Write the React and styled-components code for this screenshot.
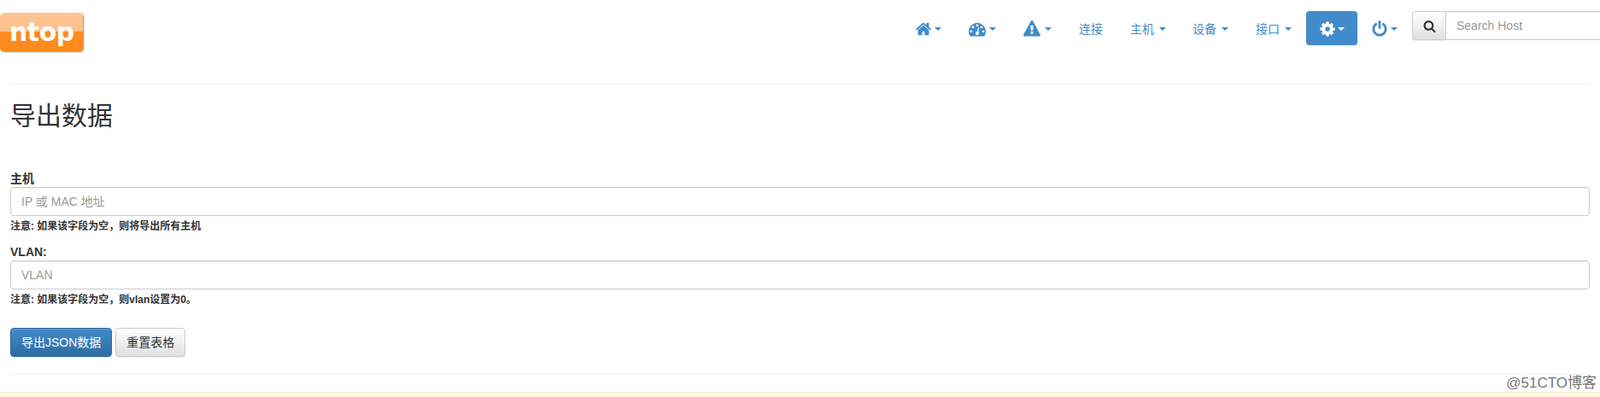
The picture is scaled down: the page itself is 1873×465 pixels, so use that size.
// App.jsx
import styled, { createGlobalStyle } from "styled-components";

const GlobalStyle = createGlobalStyle`
  html, body {
    margin: 0;
    height: 100%;
    overflow: hidden;
    background: #fff;
  }
  body {
    font-family: "Liberation Sans", "Noto Sans CJK SC", sans-serif;
    font-size: 14px;
    line-height: 20px;
    color: #333;
  }
  * { box-sizing: border-box; }
`;

const Page = styled.div`
  position: relative;
  width: 1873px;
  height: 465px;
  overflow: hidden;
`;

const Header = styled.header`
  display: flex;
  align-items: flex-start;
  height: 98px;
  padding-top: 13px;
`;

const Logo = styled.a`
  flex: none;
  display: block;
  width: 97px;
  height: 45px;
  margin-top: 2px;
  padding-left: 11px;
  border-radius: 5px 4px 4px 4px;
  background: linear-gradient(#fdc592 0, #fdc08a 50%, #ff8c20 50%, #ff8a1c 100%);
  box-shadow: 1px 1px 2px #8a8a8a;
  color: #fff;
  font-family: "DejaVu Sans", sans-serif;
  font-weight: 700;
  font-size: 30px;
  line-height: 45px;
  letter-spacing: -0.5px;
`;

const Nav = styled.nav`
  display: flex;
  align-items: flex-start;
  margin-left: 959px;
  flex: none;
`;

const NavItem = styled.a`
  display: flex;
  align-items: center;
  height: 40px;
  margin-right: ${(p) => p.$gap ?? 2}px;
  padding: 2px 15px 0;
  border-radius: 4px;
  color: ${(p) => (p.$active ? "#fff" : "#428bca")};
  background: ${(p) => (p.$active ? "#428bca" : "transparent")};
  font-size: 14px;
  white-space: nowrap;
`;

const Caret = styled.span`
  display: inline-block;
  width: 0;
  height: 0;
  margin-left: ${(p) => p.$left ?? 6}px;
  border-top: 4px solid currentColor;
  border-left: 4px solid transparent;
  border-right: 4px solid transparent;
`;

const Icon = styled.svg`
  display: block;
  width: ${(p) => p.$size}px;
  height: ${(p) => p.$size}px;
  fill: currentColor;
`;

const SearchGroup = styled.div`
  flex: none;
  display: flex;
  width: 230px;
  height: 34px;
`;

const SearchButton = styled.button`
  flex: none;
  display: flex;
  align-items: center;
  justify-content: center;
  width: 39px;
  padding: 0;
  border: 1px solid #ccc;
  border-right: 0;
  border-radius: 4px 0 0 4px;
  background: linear-gradient(#fff, #e0e0e0);
  box-shadow: 0 1px 1px rgba(0, 0, 0, 0.075);
  color: #333;
`;

const Field = styled.input`
  display: block;
  width: 100%;
  height: 34px;
  padding: 6px 12px;
  border: 1px solid #ccc;
  border-radius: ${(p) => (p.$joined ? "0" : "4px")};
  box-shadow: inset 0 1px 1px rgba(0, 0, 0, 0.075);
  background: #fff;
  color: #555;
  font: inherit;
  outline: none;

  &::placeholder {
    color: #999;
    opacity: 1;
  }
`;

const Content = styled.main`
  padding: 0 12px;
`;

const Rule = styled.hr`
  height: 1px;
  margin: 0;
  border: 0;
  background: #eee;
`;

const Title = styled.h2`
  margin: 20px 0 0;
  height: 79px;
  font-weight: 400;
  font-size: 30px;
  line-height: 33px;
  color: #333;
`;

const Group = styled.div`
  margin-bottom: ${(p) => p.$after}px;
`;

const Label = styled.label`
  display: block;
  height: 20px;
  margin-bottom: 1px;
  padding-top: 1px;
  font-weight: 700;
  font-size: 14px;
`;

const Note = styled.small`
  display: block;
  margin-top: 2px;
  font-weight: 700;
  font-size: 12px;
  line-height: 20px;
  color: #333;
`;

const Actions = styled.div`
  display: flex;
  gap: 4px;
`;

const Button = styled.button`
  height: 34px;
  padding: 0 12px;
  border: 1px solid ${(p) => (p.$primary ? "#2b669a" : "#ccc")};
  border-radius: 4px;
  background: ${(p) =>
    p.$primary
      ? "linear-gradient(#428bca, #2d6ca2)"
      : "linear-gradient(#fff, #e0e0e0)"};
  box-shadow: inset 0 1px 0 rgba(255, 255, 255, 0.15), 0 1px 1px rgba(0, 0, 0, 0.075);
  color: ${(p) => (p.$primary ? "#fff" : "#333")};
  font: inherit;
`;

const Footer = styled.div`
  margin-top: 20px;
  height: 1px;
  background: #eee;
`;

const Alert = styled.div`
  position: absolute;
  left: 0;
  right: 0;
  top: 459px;
  height: 20px;
  border-top: 1px solid #faebcc;
  background: #fcf8e3;
`;

const Watermark = styled.span`
  position: absolute;
  right: 4px;
  top: 437px;
  font-size: 17px;
  line-height: 24px;
  color: #777;
`;

const paths = {
  home: "M1472 992v480q0 26-19 45t-45 19h-384v-384h-256v384h-384q-26 0-45-19t-19-45v-480q0-1 .5-3t.5-3l575-474 575 474q1 2 1 6zm223-69l-62 74q-8 9-21 11h-3q-13 0-21-7l-692-577-692 577q-12 8-24 7-13-2-21-11l-62-74q-8-10-7-23.500t11-21.500l719-599q32-26 76-26t76 26l244 204v-195q0-14 9-23t23-9h192q14 0 23 9t9 23v408l219 182q10 8 11 21.500t-7 23.500z",
  gauge: "M384 1152q0-53-37.500-90.500t-90.500-37.500-90.500 37.500-37.500 90.500 37.500 90.500 90.500 37.500 90.500-37.500 37.500-90.500zm192-448q0-53-37.500-90.500t-90.500-37.500-90.500 37.500-37.500 90.500 37.500 90.500 90.500 37.500 90.500-37.500 37.500-90.500zm428 481l101-382q6-26-7.500-48.500t-38.500-29.500-48 6.500-30 39.500l-101 382q-60 5-107 43.500t-63 98.500q-20 77 20 146t117 89 146-20 89-117q16-60-6-117t-72-91zm660-33q0-53-37.500-90.500t-90.500-37.500-90.500 37.500-37.500 90.500 37.500 90.500 90.500 37.500 90.500-37.500 37.500-90.500zm-640-640q0-53-37.500-90.500t-90.500-37.500-90.500 37.500-37.500 90.500 37.500 90.500 90.500 37.500 90.500-37.500 37.500-90.500zm448 192q0-53-37.500-90.500t-90.500-37.500-90.500 37.500-37.500 90.500 37.500 90.500 90.500 37.500 90.500-37.500 37.500-90.500zm320 448q0 261-141 483-19 29-54 29h-1402q-35 0-54-29-141-221-141-483 0-182 71-348t191-286 286-191 348-71 348 71 286 191 191 286 71 348z",
  warning: "M1024 1375v-190q0-14-9.500-23.500t-22.500-9.500h-192q-13 0-22.500 9.500t-9.500 23.500v190q0 14 9.500 23.500t22.500 9.500h192q13 0 22.500-9.500t9.500-23.500zm-2-374l18-459q0-12-10-19-13-11-24-11h-220q-11 0-24 11-10 7-10 21l17 457q0 10 10 16.500t24 6.500h185q14 0 23.500-6.500t10.500-16.500zm-14-934l768 1408q35 63-2 126-17 29-46.500 46t-63.500 17h-1536q-34 0-63.500-17t-46.500-46q-37-63-2-126l768-1408q17-31 47-49t65-18 65 18 47 49z",
  cog: "M1152 896q0-106-75-181t-181-75-181 75-75 181 75 181 181 75 181-75 75-181zm512-109v222q0 12-8 23t-20 13l-185 28q-19 54-39 91 35 50 107 138 10 12 10 25t-9 23q-27 37-99 108t-94 71q-12 0-26-9l-138-108q-44 23-91 38-16 136-29 186-7 28-36 28h-222q-14 0-24.500-8.500t-11.500-21.500l-28-184q-49-16-90-37l-141 107q-10 9-25 9-14 0-25-11-126-114-165-168-7-10-7-23 0-12 8-23 15-21 51-66.500t54-70.500q-27-50-41-99l-183-27q-13-2-21-12.500t-8-23.500v-222q0-12 8-23t19-13l186-28q14-46 39-92-40-57-107-138-10-12-10-24 0-10 9-23 26-36 98.500-107.500t94.500-71.500q13 0 26 10l138 107q44-23 91-38 16-136 29-186 7-28 36-28h222q14 0 24.500 8.500t11.500 21.500l28 184q49 16 90 37l142-107q9-9 24-9 13 0 25 10 129 119 165 170 7 8 7 22 0 12-8 23-15 21-51 66.500t-54 70.500q26 50 41 98l183 28q13 2 22 12.500t9 23.500z",
  power: "M1664 896q0 156-61 298t-164 245-245 164-298 61-298-61-245-164-164-245-61-298q0-182 80.500-343t226.500-270q43-32 95.500-25t83.500 50q32 42 24.500 94.500t-49.500 84.500q-98 74-151.500 181t-53.500 228q0 104 40.500 198.500t109.500 163.500 163.500 109.500 198.500 40.500 198.500-40.500 163.500-109.500 109.500-163.500 40.500-198.500q0-121-53.500-228t-151.500-181q-42-32-49.500-84.500t24.500-94.500q31-43 84-50t95 25q146 109 226.500 270t80.500 343zm-640-768v640q0 52-38 90t-90 38-90-38-38-90v-640q0-52 38-90t90-38 90 38 38 90z",
  search: "M1216 832q0-185-131.500-316.500t-316.500-131.500-316.500 131.500-131.500 316.500 131.500 316.500 316.500 131.500 316.500-131.500 131.500-316.500zm512 832q0 52-38 90t-90 38q-54 0-90-38l-343-342q-179 124-399 124-143 0-273.500-55.500t-225-150-150-225-55.500-273.500 55.500-273.500 150-225 225-150 273.500-55.500 273.500 55.500 225 150 150 225 55.500 273.500q0 220-124 399l343 343q37 37 37 90z",
};

function Glyph({ name, size = 20 }) {
  return (
    <Icon $size={size} viewBox="0 0 1792 1792">
      <path d={paths[name]} />
    </Icon>
  );
}

function App() {
  return (
    <Page>
      <GlobalStyle />
      <Header>
        <Logo>ntop</Logo>
        <Nav>
          <NavItem><Glyph name="home" /><Caret $left={3} /></NavItem>
          <NavItem><Glyph name="gauge" /><Caret $left={4} /></NavItem>
          <NavItem><Glyph name="warning" /><Caret $left={5} /></NavItem>
          <NavItem>连接</NavItem>
          <NavItem $gap={1}>主机<Caret /></NavItem>
          <NavItem $gap={2}>设备<Caret /></NavItem>
          <NavItem $gap={2}>接口<Caret /></NavItem>
          <NavItem $gap={1} $active><Glyph name="cog" /><Caret $left={2} /></NavItem>
          <NavItem><Glyph name="power" /><Caret $left={3} /></NavItem>
          <SearchGroup>
            <SearchButton><Glyph name="search" size={15} /></SearchButton>
            <Field $joined placeholder="Search Host" />
          </SearchGroup>
        </Nav>
      </Header>
      <Content>
        <Rule />
        <Title>导出数据</Title>
        <Group $after={9}>
          <Label>主机</Label>
          <Field placeholder="IP 或 MAC 地址" />
          <Note>注意: 如果该字段为空，则将导出所有主机</Note>
        </Group>
        <Group $after={23}>
          <Label>VLAN:</Label>
          <Field placeholder="VLAN" />
          <Note>注意: 如果该字段为空，则vlan设置为0。</Note>
        </Group>
        <Actions>
          <Button $primary>导出JSON数据</Button>
          <Button>重置表格</Button>
        </Actions>
        <Footer />
      </Content>
      <Alert />
      <Watermark>@51CTO博客</Watermark>
    </Page>
  );
}

export default App;
